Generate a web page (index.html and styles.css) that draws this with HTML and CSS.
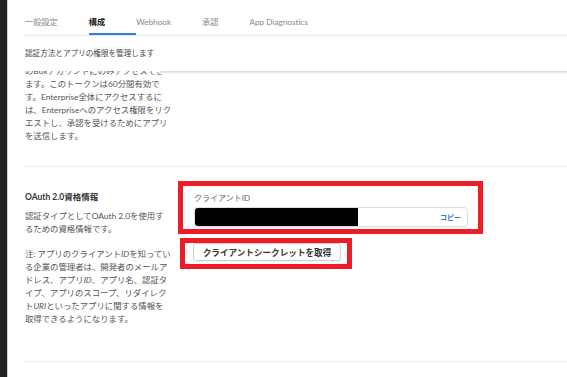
FILE: index.html
```html
<!DOCTYPE html>
<html lang="ja">
<head>
<meta charset="utf-8">
<link rel="stylesheet" href="styles.css">
</head>
<body>
<div class="sidebar"></div>
<div class="main">
  <div class="header">
    <nav class="tabs">
      <span class="tab">一般設定</span>
      <span class="tab active">構成</span>
      <span class="tab">Webhook</span>
      <span class="tab">承認</span>
      <span class="tab">App Diagnostics</span>
    </nav>
    <p class="desc">認証方法とアプリの権限を管理します</p>
  </div>
  <div class="scroll">
    <section class="section first">
      <p class="text clipped">のBoxアカウントにのみアクセスでき<br>ます。このトークンは60分間有効で<br>す。Enterprise全体にアクセスするに<br>は、Enterpriseへのアクセス権限をリク<br>エストし、承認を受けるためにアプリ<br>を送信します。</p>
    </section>
    <section class="section oauth">
      <div class="left">
        <h3 class="title">OAuth 2.0資格情報</h3>
        <p class="text">認証タイプとしてOAuth 2.0を使用す<br>るための資格情報です。</p>
        <p class="text note">注: アプリのクライアント<i>ID</i>を知ってい<br>る企業の管理者は、開発者のメールア<br>ドレス、アプリ<i>ID</i>、アプリ名、認証タ<br>イプ、アプリのスコープ、リダイレク<br>ト<i>URI</i>といったアプリに関する情報を<br>取得できるようになります。</p>
      </div>
      <div class="right">
        <div class="mark mark-id">
          <div class="label">クライアントID</div>
          <div class="input">
            <div class="redact"></div>
            <span class="copy">コピー</span>
          </div>
        </div>
        <div class="mark mark-btn">
          <button class="btn">クライアントシークレットを取得</button>
        </div>
      </div>
    </section>
  </div>
</div>
</body>
</html>
```

FILE: styles.css
```css
* { box-sizing: border-box; }
html, body { margin: 0; padding: 0; }
body {
  width: 567px;
  height: 377px;
  overflow: hidden;
  display: flex;
  background: #fff;
  font-family: Lato, "Noto Sans CJK JP", sans-serif;
  color: #555;
}
.sidebar {
  width: 8px;
  flex: 0 0 8px;
  background: #222;
  border-right: 1px solid #cfcfcf;
}
.main {
  flex: 1;
  padding-left: 16px;
  display: flex;
  flex-direction: column;
  min-width: 0;
}
.tabs {
  display: flex;
  height: 36px;
  border-bottom: 1px solid #e9e9e9;
  padding-left: 1px;
}
.tab {
  font-size: 8.2px;
  line-height: 12px;
  padding: 16px 31px 0 0;
  color: #888;
  height: 35px;
}
.tab.active {
  color: #222;
  font-weight: 700;
  border-bottom: 2px solid #2f7fe0;
}
.desc {
  margin: 0;
  padding: 11px 0 12px 1px;
  font-size: 7.6px;
  line-height: 12px;
  color: #444;
}
.scroll {
  flex: 1;
  overflow: hidden;
  position: relative;
}
.scroll::before {
  content: "";
  position: absolute;
  top: 0;
  left: 137px;
  right: 0;
  height: 3px;
  background: linear-gradient(#d6d6d6, #fff);
}
.section {
  border-bottom: 1px solid #ececec;
  padding-left: 1px;
}
.text {
  margin: 0;
  width: 147px;
  white-space: nowrap;
  font-size: 8.4px;
  line-height: 13px;
  color: #555;
}
.first { padding-bottom: 23px; }
.clipped { margin-top: -6px; }
.oauth {
  display: flex;
  gap: 6px;
  padding-top: 14px;
  padding-bottom: 35px;
}
.left { width: 147px; flex: 0 0 147px; padding-top: 10px; }
.title {
  margin: 0 0 6px;
  font-size: 8.5px;
  line-height: 13px;
  font-weight: 700;
  color: #333;
}
.note { margin-top: 12px; }
.note i { font-style: italic; }
.right {
  display: flex;
  flex-direction: column;
  align-items: flex-start;
}
.mark {
  border: 5px solid #ee1d25;
}
.mark-id {
  width: 305px;
  padding: 6px 10px 2px 11px;
}
.label {
  font-size: 8px;
  line-height: 12px;
  color: #666;
  margin-bottom: 3px;
}
.input {
  height: 20px;
  border: 1px solid #dedede;
  border-radius: 4px;
  display: flex;
  align-items: center;
  overflow: hidden;
  box-shadow: 0 1px 1px rgba(0,0,0,0.04);
}
.redact {
  width: 163px;
  height: 18px;
  background: #000;
}
.copy {
  margin-left: auto;
  padding-right: 6px;
  font-size: 7px;
  font-weight: 700;
  color: #3a72dc;
}
.mark-btn {
  margin: 4px 0 0 2px;
  padding: 0 6px 3px 8px;
}
.btn {
  display: block;
  width: 148px;
  height: 18px;
  padding: 0;
  background: #fff;
  border: 1px solid #cfcfcf;
  border-radius: 3px;
  font-family: Lato, "Noto Sans CJK JP", sans-serif;
  font-size: 8.6px;
  font-weight: 700;
  color: #333;
  box-shadow: 0 1px 1px rgba(0,0,0,0.05);
}
```
